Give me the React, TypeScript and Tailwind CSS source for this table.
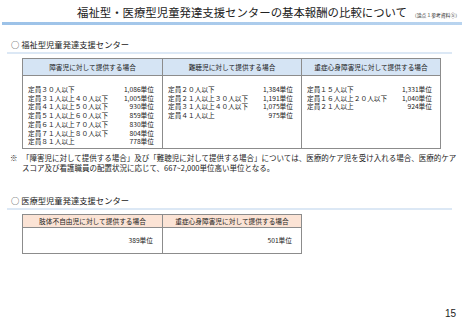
import React from 'react';

const welfareCols = [
  {
    title: '障害児に対して提供する場合',
    rows: [
      ['定員３０人以下', '1,086単位'],
      ['定員３１人以上４０人以下', '1,005単位'],
      ['定員４１人以上５０人以下', '930単位'],
      ['定員５１人以上６０人以下', '859単位'],
      ['定員６１人以上７０人以下', '830単位'],
      ['定員７１人以上８０人以下', '804単位'],
      ['定員８１人以上', '778単位'],
    ],
  },
  {
    title: '難聴児に対して提供する場合',
    rows: [
      ['定員２０人以下', '1,384単位'],
      ['定員２１人以上３０人以下', '1,191単位'],
      ['定員３１人以上４０人以下', '1,075単位'],
      ['定員４１人以上', '975単位'],
    ],
  },
  {
    title: '重症心身障害児に対して提供する場合',
    rows: [
      ['定員１５人以下', '1,331単位'],
      ['定員１６人以上２０人以下', '1,040単位'],
      ['定員２１人以上', '924単位'],
    ],
  },
];

const medicalCols = [
  { title: '肢体不自由児に対して提供する場合', value: '389単位' },
  { title: '重症心身障害児に対して提供する場合', value: '501単位' },
];

function SectionHeading({ label }: { label: string }) {
  return (
    <div>
      <div className="pl-[11px] text-[8.3px] leading-[12px] text-[#222]">○ {label}</div>
      <div className="mt-[2px] ml-[7px] mr-[10px] h-[2px] bg-[#dce8f5]" />
    </div>
  );
}

export default function App() {
  return (
    <div className="w-[462px] h-[320px] bg-white text-[#1a1a1a] font-['Noto_Sans_CJK_JP','Noto_Sans',sans-serif] overflow-hidden">
      <div className="flex items-end whitespace-nowrap pt-[4px] pl-[77px]">
        <h1 className="text-[11.4px] leading-[17px] text-[#222]">福祉型・医療型児童発達支援センターの基本報酬の比較について</h1>
        <span className="ml-[5px] mb-[3px] text-[4.8px] leading-[7px] text-[#333]">（論点１参考資料⑤）</span>
      </div>
      <div className="mt-[1px] ml-[2px] h-[3px] bg-gradient-to-r from-[#9cc2e8] to-[#b9d4ef]" />

      <div className="mt-[13px]">
        <SectionHeading label="福祉型児童発達支援センター" />
      </div>

      <div className="mt-[4px] ml-[22px] w-[419px] grid grid-cols-3 border border-[#8c8c8c] text-[6.7px]">
        {welfareCols.map((col, i) => (
          <div key={i} className={i > 0 ? 'border-l border-[#8c8c8c]' : ''}>
            <div className="h-[17px] flex items-center justify-center bg-[#d5e4f4] border-b border-[#8c8c8c]">
              {col.title}
            </div>
            <div className="h-[72px] pt-[9px] pl-[5px] pr-[8px]">
              {col.rows.map(([label, value], j) => (
                <div key={j} className="flex justify-between leading-[8.7px]">
                  <span>{label}</span>
                  <span>{value}</span>
                </div>
              ))}
            </div>
          </div>
        ))}
      </div>

      <div className="mt-[4px] pl-[10px] flex whitespace-nowrap text-[7.5px] leading-[10px] text-[#222]">
        <span className="w-[12px] shrink-0">※</span>
        <p>
          「障害児に対して提供する場合」及び「難聴児に対して提供する場合」については、医療的ケア児を受け入れる場合、医療的ケア
          <br />
          スコア及び看護職員の配置状況に応じて、667~2,000単位高い単位となる。
        </p>
      </div>

      <div className="mt-[21px]">
        <SectionHeading label="医療型児童発達支援センター" />
      </div>

      <div className="mt-[4px] ml-[22px] w-[280px] grid grid-cols-2 border border-[#8c8c8c] text-[6.7px]">
        {medicalCols.map((col, i) => (
          <div key={i} className={i > 0 ? 'border-l border-[#8c8c8c]' : ''}>
            <div className="h-[13px] flex items-center justify-center bg-[#fbe3d5] border-b border-[#8c8c8c]">
              {col.title}
            </div>
            <div className="h-[25px] flex items-center justify-end pr-[9px]">{col.value}</div>
          </div>
        ))}
      </div>

      <div className="mt-[54px] pr-[6px] text-right font-['Liberation_Sans',sans-serif] text-[10px] leading-[12px] text-[#222]">
        15
      </div>
    </div>
  );
}
